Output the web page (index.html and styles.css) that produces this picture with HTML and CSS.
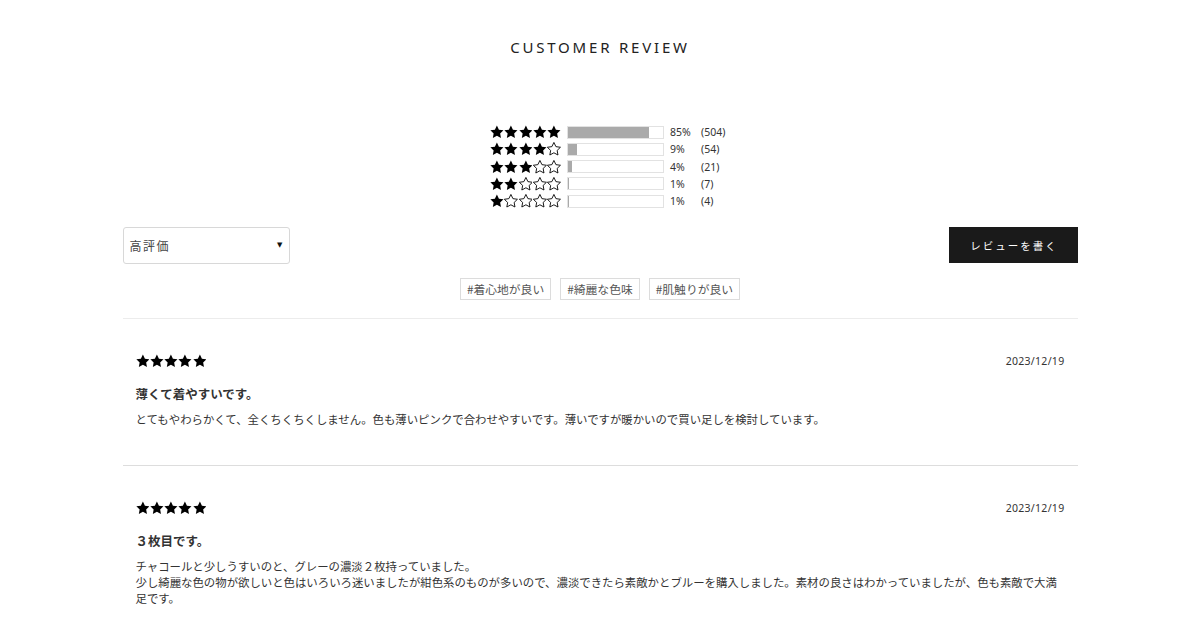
FILE: index.html
```html
<!DOCTYPE html>
<html lang="ja">
<head>
<meta charset="utf-8">
<link rel="stylesheet" href="styles.css">
</head>
<body>
<svg width="0" height="0" class="defs">
  <defs>
    <path id="star" d="M12 2.5l2.94 6.1 6.56.9-4.78 4.6 1.17 6.6L12 17.5l-5.890 3.2 1.17-6.6L2.5 9.5l6.56-.9z"/>
  </defs>
</svg>
<div class="page">
  <h1 class="title">CUSTOMER REVIEW</h1>

  <div class="ratings">
    <div class="rrow">
      <span class="stars"><svg class="s f" viewBox="2 2 20 20"><use href="#star"/></svg><svg class="s f" viewBox="2 2 20 20"><use href="#star"/></svg><svg class="s f" viewBox="2 2 20 20"><use href="#star"/></svg><svg class="s f" viewBox="2 2 20 20"><use href="#star"/></svg><svg class="s f" viewBox="2 2 20 20"><use href="#star"/></svg></span>
      <span class="bar"><span class="fill" style="width:85%"></span></span>
      <span class="pct">85%</span><span class="cnt">(504)</span>
    </div>
    <div class="rrow">
      <span class="stars"><svg class="s f" viewBox="2 2 20 20"><use href="#star"/></svg><svg class="s f" viewBox="2 2 20 20"><use href="#star"/></svg><svg class="s f" viewBox="2 2 20 20"><use href="#star"/></svg><svg class="s f" viewBox="2 2 20 20"><use href="#star"/></svg><svg class="s o" viewBox="2 2 20 20"><use href="#star"/></svg></span>
      <span class="bar"><span class="fill" style="width:9%"></span></span>
      <span class="pct">9%</span><span class="cnt">(54)</span>
    </div>
    <div class="rrow">
      <span class="stars"><svg class="s f" viewBox="2 2 20 20"><use href="#star"/></svg><svg class="s f" viewBox="2 2 20 20"><use href="#star"/></svg><svg class="s f" viewBox="2 2 20 20"><use href="#star"/></svg><svg class="s o" viewBox="2 2 20 20"><use href="#star"/></svg><svg class="s o" viewBox="2 2 20 20"><use href="#star"/></svg></span>
      <span class="bar"><span class="fill" style="width:4%"></span></span>
      <span class="pct">4%</span><span class="cnt">(21)</span>
    </div>
    <div class="rrow">
      <span class="stars"><svg class="s f" viewBox="2 2 20 20"><use href="#star"/></svg><svg class="s f" viewBox="2 2 20 20"><use href="#star"/></svg><svg class="s o" viewBox="2 2 20 20"><use href="#star"/></svg><svg class="s o" viewBox="2 2 20 20"><use href="#star"/></svg><svg class="s o" viewBox="2 2 20 20"><use href="#star"/></svg></span>
      <span class="bar"><span class="fill" style="width:1%"></span></span>
      <span class="pct">1%</span><span class="cnt">(7)</span>
    </div>
    <div class="rrow">
      <span class="stars"><svg class="s f" viewBox="2 2 20 20"><use href="#star"/></svg><svg class="s o" viewBox="2 2 20 20"><use href="#star"/></svg><svg class="s o" viewBox="2 2 20 20"><use href="#star"/></svg><svg class="s o" viewBox="2 2 20 20"><use href="#star"/></svg><svg class="s o" viewBox="2 2 20 20"><use href="#star"/></svg></span>
      <span class="bar"><span class="fill" style="width:1%"></span></span>
      <span class="pct">1%</span><span class="cnt">(4)</span>
    </div>
  </div>

  <div class="controls">
    <div class="select"><span class="sel-text">高評価</span><span class="arrow">▼</span></div>
    <div class="btn">レビューを書く</div>
  </div>

  <div class="tags">
    <span class="tag">#着心地が良い</span>
    <span class="tag">#綺麗な色味</span>
    <span class="tag">#肌触りが良い</span>
  </div>

  <div class="review first">
    <div class="rhead">
      <span class="stars big"><svg class="s f" viewBox="2 2 20 20"><use href="#star"/></svg><svg class="s f" viewBox="2 2 20 20"><use href="#star"/></svg><svg class="s f" viewBox="2 2 20 20"><use href="#star"/></svg><svg class="s f" viewBox="2 2 20 20"><use href="#star"/></svg><svg class="s f" viewBox="2 2 20 20"><use href="#star"/></svg></span>
      <span class="date">2023/12/19</span>
    </div>
    <h2 class="rtitle">薄くて着やすいです。</h2>
    <p class="rbody">とてもやわらかくて、全くちくちくしません。色も薄いピンクで合わせやすいです。薄いですが暖かいので買い足しを検討しています。</p>
  </div>

  <div class="review">
    <div class="rhead">
      <span class="stars big"><svg class="s f" viewBox="2 2 20 20"><use href="#star"/></svg><svg class="s f" viewBox="2 2 20 20"><use href="#star"/></svg><svg class="s f" viewBox="2 2 20 20"><use href="#star"/></svg><svg class="s f" viewBox="2 2 20 20"><use href="#star"/></svg><svg class="s f" viewBox="2 2 20 20"><use href="#star"/></svg></span>
      <span class="date">2023/12/19</span>
    </div>
    <h2 class="rtitle">３枚目です。</h2>
    <p class="rbody">チャコールと少しうすいのと、グレーの濃淡２枚持っていました。<br>少し綺麗な色の物が欲しいと色はいろいろ迷いましたが紺色系のものが多いので、濃淡できたら素敵かとブルーを購入しました。素材の良さはわかっていましたが、色も素敵で大満足です。</p>
  </div>
</div>
</body>
</html>
```

FILE: styles.css
```css
* { box-sizing: border-box; }
html, body { margin: 0; padding: 0; background: #fff; }
body {
  font-family: "Noto Sans", "Noto Sans CJK JP", sans-serif;
  color: #222;
  overflow: hidden;
}
.defs { position: absolute; }
.page {
  width: 955px;
  margin: 0 auto;
}
.title {
  margin: 37px 0 0;
  font-family: "Noto Sans", sans-serif;
  font-weight: 400;
  font-size: 15px;
  line-height: 20px;
  letter-spacing: 2.8px;
  text-align: center;
  color: #222;
  padding-left: 0;
}
.ratings {
  width: 220px;
  margin: 66px auto 0;
  padding-top: 0.4px;
}
.rrow {
  display: flex;
  align-items: center;
  height: 17.3px;
  white-space: nowrap;
}
.stars {
  display: flex;
  gap: 0.5px;
  width: 71px;
  flex: none;
}
.s {
  width: 14px;
  height: 14px;
  display: block;
}
.s.f { fill: #000; }
.s.o { fill: none; stroke: #000; stroke-width: 1.3; stroke-linejoin: round; }
.bar {
  margin-left: 6px;
  width: 97px;
  height: 13px;
  border: 1px solid #e2e2e2;
  flex: none;
  display: block;
}
.fill {
  display: block;
  height: 100%;
  background: #aaa;
}
.pct {
  margin-left: 6px;
  width: 31px;
  flex: none;
  font-size: 10.5px;
  color: #333;
}
.cnt {
  font-size: 10.5px;
  color: #333;
}
.controls {
  margin-top: 17px;
  display: flex;
  justify-content: space-between;
  align-items: center;
}
.select {
  width: 167px;
  height: 37px;
  border: 1px solid #d8d8d8;
  border-radius: 3px;
  display: flex;
  align-items: center;
  justify-content: space-between;
  padding: 0 6px 0 6px;
}
.sel-text {
  font-family: "Noto Sans CJK JP", sans-serif;
  font-size: 12px;
  letter-spacing: 1.5px;
  color: #444;
}
.arrow {
  font-family: "DejaVu Sans", sans-serif;
  font-size: 7px;
  color: #111;
}
.btn {
  width: 129px;
  height: 36px;
  background: #1a1a1a;
  color: #fff;
  font-family: "Noto Sans CJK JP", sans-serif;
  font-size: 10.5px;
  letter-spacing: 2px;
  display: flex;
  align-items: center;
  justify-content: center;
  padding-left: 2px;
}
.tags {
  margin-top: 14px;
  display: flex;
  justify-content: center;
  gap: 9px;
  padding-bottom: 18px;
  border-bottom: 1px solid #ececec;
}
.tag {
  height: 22px;
  border: 1px solid #dcdcdc;
  padding: 0 6px;
  font-family: "Noto Sans CJK JP", sans-serif;
  font-size: 11.8px;
  line-height: 20px;
  color: #555;
}
.review {
  padding: 35px 13px 38px;
  border-bottom: 1px solid #ddd;
}
.rhead {
  display: flex;
  justify-content: space-between;
  align-items: center;
  height: 14px;
}
.stars.big { gap: 0.5px; }
.date {
  font-size: 10.5px;
  color: #333;
  letter-spacing: 0.3px;
}
.rtitle {
  margin: 17px 0 0;
  font-family: "Noto Sans CJK JP", sans-serif;
  font-size: 12.5px;
  font-weight: 700;
  line-height: 18px;
  color: #333;
}
.rbody {
  margin: 8px 0 0;
  font-family: "Noto Sans CJK JP", sans-serif;
  font-size: 11.4px;
  line-height: 16px;
  color: #333;
}
```
